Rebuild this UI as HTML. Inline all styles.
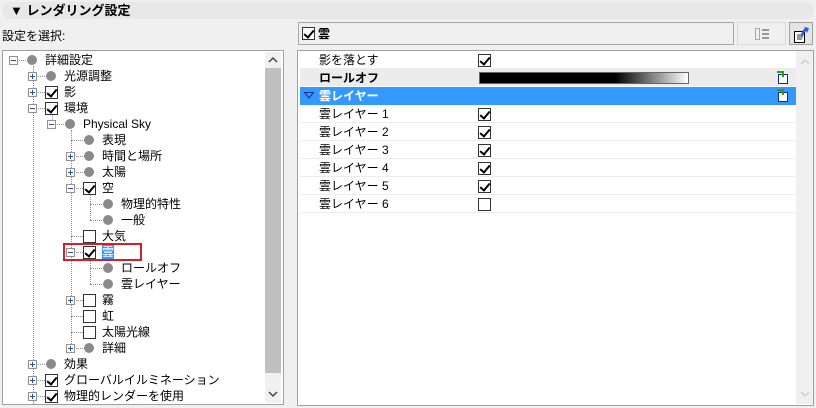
<!DOCTYPE html>
<html><head><meta charset="utf-8"><style>
*{margin:0;padding:0;box-sizing:border-box}
body{width:816px;height:408px;background:#f0f0f0;font-family:"Liberation Sans","Noto Sans CJK JP",sans-serif;font-size:12px;color:#000;position:relative;overflow:hidden}
.a{position:absolute}
.t{position:absolute;line-height:16px;white-space:nowrap}
.exp{position:absolute;width:9px;height:9px;border:1px solid #919191;background:#fff}
.exp:before{content:"";position:absolute;left:1px;top:3px;width:5px;height:1px;background:#2b4aa0}
.exp.p:after{content:"";position:absolute;left:3px;top:1px;width:1px;height:5px;background:#2b4aa0}
.dot{position:absolute;width:10px;height:10px;border-radius:50%;background:#8a8a8a}
.cb{position:absolute;width:13px;height:13px;border:1px solid #333;background:#fff}
.cb.c:after{content:"";position:absolute;left:3px;top:0px;width:4px;height:8px;border-right:2px solid #000;border-bottom:2px solid #000;transform:rotate(40deg)}
.vl{position:absolute;width:1px;border-left:1px dotted #909090}
.hl{position:absolute;height:1px;border-top:1px dotted #909090}
.row{position:absolute;left:300px;width:496px;height:18px;border-bottom:1px solid #ececec}
</style></head><body>
<div class="a" style="left:2px;top:2px;width:812px;height:17px;background:#e8e8e8;border-radius:8px"></div>
<div class="t" style="left:10px;top:3px;font-weight:bold;font-size:13px">▼ レンダリング設定</div>
<div class="t" style="left:2px;top:28px">設定を選択:</div>

<div class="a" style="left:2px;top:50px;width:282px;height:355px;background:#fff;border:1px solid #a0a0a0"></div>
<div class="a" style="left:265px;top:52px;width:16px;height:351px;background:#f0f0f0"></div>
<div class="a" style="left:265px;top:68px;width:16px;height:305px;background:#c0c0c0"></div>
<svg class="a" style="left:268px;top:56px" width="10" height="8"><path d="M1 6 L5 2 L9 6" stroke="#444" stroke-width="1.5" fill="none"/></svg>
<svg class="a" style="left:268px;top:390px" width="10" height="8"><path d="M1 2 L5 6 L9 2" stroke="#444" stroke-width="1.5" fill="none"/></svg>

<div class="vl" style="left:33px;top:66px;height:338px"></div>
<div class="vl" style="left:52px;top:114px;height:10px"></div>
<div class="vl" style="left:71px;top:130px;height:218px"></div>
<div class="vl" style="left:90px;top:194px;height:26px"></div>
<div class="vl" style="left:90px;top:258px;height:26px"></div>

<div id="tree"></div>
<script>
var items=[[0,60,'-','d','詳細設定'],[1,76,'+','d','光源調整'],[1,92,'+','c','影'],[1,108,'-','c','環境'],[2,124,'-','d','Physical Sky'],[3,140,'','d','表現'],[3,156,'+','d','時間と場所'],[3,172,'+','d','太陽'],[3,188,'-','c','空'],[4,204,'','d','物理的特性'],[4,220,'','d','一般'],[3,236,'','u','大気'],[3,252,'-','c','雲'],[4,268,'','d','ロールオフ'],[4,284,'','d','雲レイヤー'],[3,300,'+','u','霧'],[3,316,'','u','虹'],[3,332,'','u','太陽光線'],[3,348,'+','d','詳細'],[1,364,'+','d','効果'],[1,380,'+','c','グローバルイルミネーション'],[1,396,'+','c','物理的レンダーを使用']];
var h='';
items.forEach(function(it){var L=it[0],y=it[1],x0=14+19*L;
h+='<div class="hl" style="left:'+(x0)+'px;top:'+y+'px;width:'+(12)+'px"></div>';
if(it[2])h+='<div class="exp '+(it[2]=='+'?'p':'')+'" style="left:'+(x0-5)+'px;top:'+(y-4)+'px"></div>';
if(it[3]=='d')h+='<div class="dot" style="left:'+(x0+13)+'px;top:'+(y-5)+'px"></div>';
else h+='<div class="cb '+(it[3]=='c'?'c':'')+'" style="left:'+(x0+12)+'px;top:'+(y-6)+'px"></div>';
var st=it[4]=='雲'?'background:#3399ff;color:#fff;':'';
h+='<div class="t" style="left:'+(x0+31)+'px;top:'+(y-8)+'px;'+st+'">'+it[4]+'</div>';});
document.getElementById('tree').innerHTML=h;
</script>
<div class="a" style="left:63px;top:243px;width:79px;height:18px;border:2px solid #d0202a"></div>

<div class="a" style="left:298px;top:22px;width:436px;height:23px;border:1px solid #a8a8a8;background:#f0f0f0"></div>
<div class="cb c" style="left:302px;top:27px"></div>
<div class="t" style="left:318px;top:26px;font-weight:bold">雲</div>
<div class="a" style="left:737px;top:22px;width:49px;height:23px;border:1px solid #d8d8d8"></div>
<div class="a" style="left:755px;top:28px;width:5px;height:12px;border:1px solid #aaa"></div>
<div class="a" style="left:762px;top:29px;width:7px;height:2px;background:#999"></div>
<div class="a" style="left:762px;top:33px;width:7px;height:2px;background:#999"></div>
<div class="a" style="left:762px;top:37px;width:7px;height:2px;background:#999"></div>
<div class="a" style="left:789px;top:22px;width:24px;height:23px;border:1px solid #a0a0a0;background:#e4e4e4"></div>
<svg class="a" style="left:792px;top:24px" width="20" height="20"><rect x="2.5" y="7.5" width="10" height="11" fill="#fff" stroke="#000"/><path d="M5 11h6M5 13h6M5 15h5" stroke="#333"/><path d="M10 12 Q11 6 15 5" stroke="#2a5ae0" stroke-width="2.5" fill="none"/><path d="M12 3 L17 4 L15 9 Z" fill="#2a5ae0"/></svg>

<div class="a" style="left:297px;top:50px;width:517px;height:356px;background:#fff;border:1px solid #a0a0a0"></div>
<div class="a" style="left:796px;top:51px;width:17px;height:353px;background:#f0f0f0"></div>
<svg class="a" style="left:800px;top:58px" width="10" height="8"><path d="M1 6 L5 2 L9 6" stroke="#ccc" stroke-width="1.5" fill="none"/></svg>
<svg class="a" style="left:800px;top:390px" width="10" height="8"><path d="M1 2 L5 6 L9 2" stroke="#ccc" stroke-width="1.5" fill="none"/></svg>

<div class="row" style="top:51px"></div>
<div class="t" style="left:319px;top:52px">影を落とす</div>
<div class="cb c" style="left:478px;top:54px"></div>
<div class="row" style="top:69px;background:#ececec;height:17px"></div>
<div class="t" style="left:319px;top:70px;font-weight:bold">ロールオフ</div>
<div class="a" style="left:479px;top:72px;width:210px;height:12px;border:1px solid #666;background:linear-gradient(90deg,#000 0%,#000 65%,#fff 100%)"></div>
<div class="a" style="left:778px;top:74px;width:10px;height:10px;border:1px solid #1a2a8a;background:#fff"></div>
<div class="a" style="left:777px;top:71px;width:7px;height:6px;border-top:2px solid #2a9a2a;border-right:2px solid #2a9a2a"></div>
<div class="a" style="left:300px;top:87px;width:496px;height:18px;background:#3399ff"></div>
<svg class="a" style="left:304px;top:92px" width="10" height="7"><path d="M0.5 0.5 L9.5 0.5 L5 6 Z" fill="none" stroke="#1a2a8a"/></svg>
<div class="t" style="left:319px;top:88px;color:#fff;font-weight:bold">雲レイヤー</div>
<div class="a" style="left:778px;top:92px;width:10px;height:10px;border:1px solid #1a2a8a;background:#fff"></div>
<div class="a" style="left:777px;top:89px;width:7px;height:6px;border-top:2px solid #2a9a2a;border-right:2px solid #2a9a2a"></div>
<div id="rows"></div>
<script>
var r='';for(var i=0;i<6;i++){var y=105+18*i;
r+='<div class="row" style="top:'+y+'px"></div><div class="t" style="left:319px;top:'+(y+1)+'px">雲レイヤー '+(i+1)+'</div><div class="cb '+(i<5?'c':'')+'" style="left:478px;top:'+(y+3)+'px"></div>';}
document.getElementById('rows').innerHTML=r;
</script>
</body></html>
